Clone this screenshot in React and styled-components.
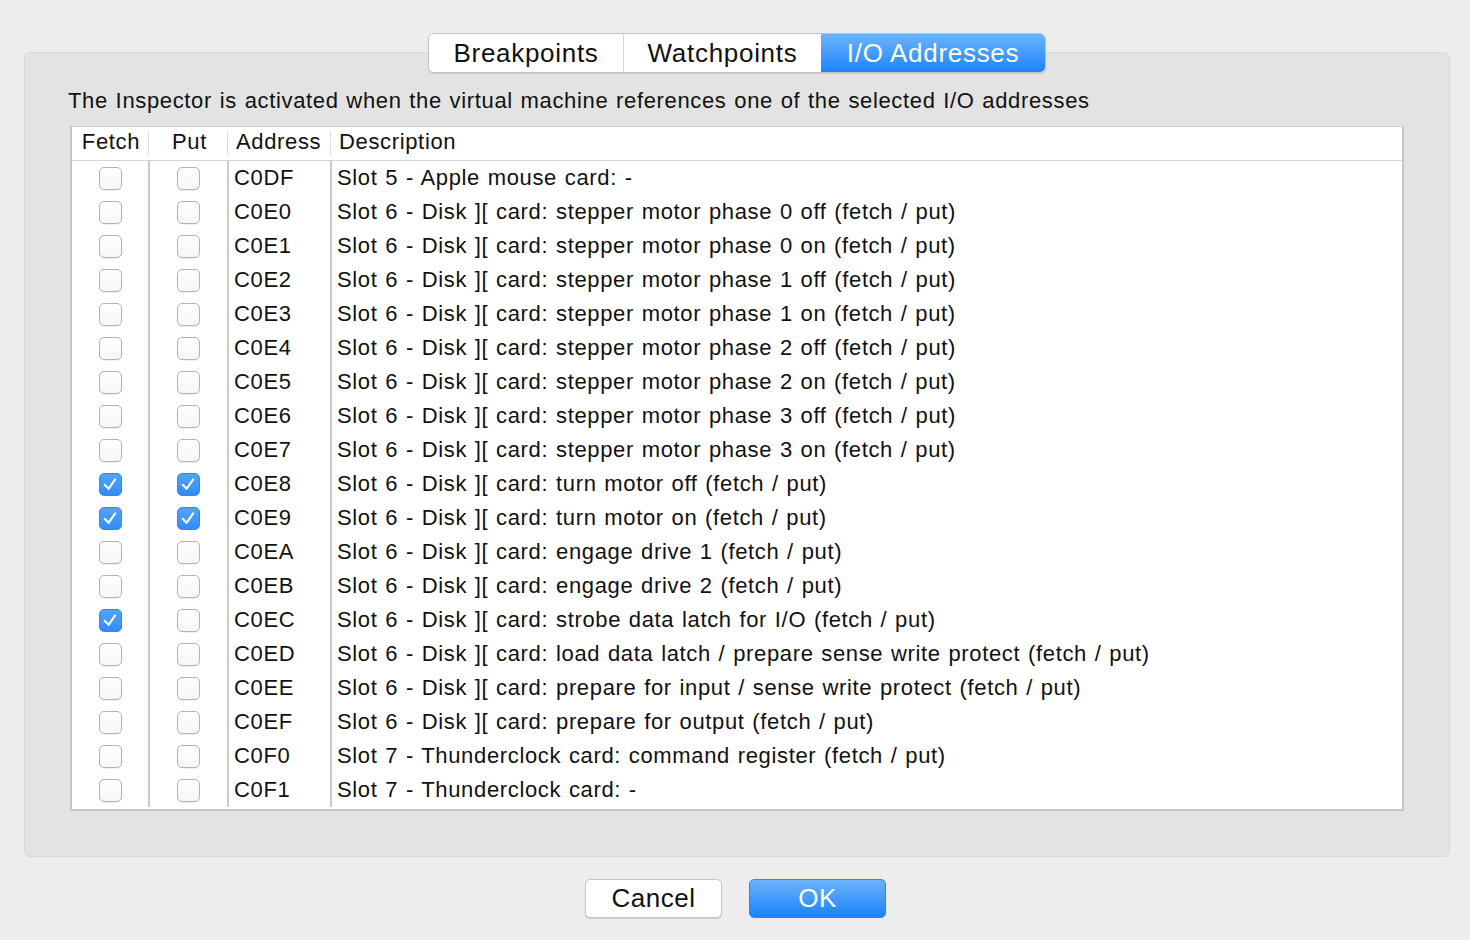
import React from 'react';
import styled, { createGlobalStyle } from 'styled-components';

const GlobalStyle = createGlobalStyle`
	html, body {
		margin: 0;
		padding: 0;
		background: #ededed;
		font-family: "Liberation Sans", Arial, Helvetica, sans-serif;
		color: #111;
	}
`;

const Page = styled.div`
	width: 1470px;
	height: 940px;
	padding: 52px 20px 0 24px;
	box-sizing: border-box;
`;

const GroupBox = styled.div`
	width: 1426px;
	height: 805px;
	box-sizing: border-box;
	background: #e3e3e3;
	border: 1px solid #d9d9d9;
	border-radius: 6px;
	padding: 0 45px 0 45px;
	display: flex;
	flex-direction: column;
`;

const TabBar = styled.div`
	align-self: center;
	margin-top: -20px;
	height: 40px;
	display: flex;
	border: 1px solid #c3c3c3;
	border-radius: 6px;
	box-sizing: border-box;
	background: #fff;
	box-shadow: 0 1px 1px rgba(0, 0, 0, 0.12);
	overflow: hidden;
`;

const Tab = styled.div`
	width: ${(p) => p.$w}px;
	display: flex;
	align-items: center;
	justify-content: center;
	font-size: 26px;
	letter-spacing: 0.7px;
	color: ${(p) => (p.$active ? '#fff' : '#111')};
	background: ${(p) => (p.$active ? 'linear-gradient(#6db4fb, #1b84fb)' : '#fff')};
	border-left: ${(p) => (p.$first || p.$active ? 'none' : '1px solid #d6d6d6')};
`;

const Intro = styled.div`
	margin: 15px 0 0 -2px;
	font-size: 22px;
	line-height: 26px;
	letter-spacing: 0.65px;
	word-spacing: 1px;
	color: #111;
`;

const Table = styled.div`
	margin-top: 12px;
	width: 1334px;
	box-sizing: border-box;
	background: #fff;
	border: 2px solid #c6c6c6;
	border-top: 1px solid #cfcfcf;
	padding-bottom: 2px;
`;

const Cols = '78px 79px 103px 1fr';

const HeaderRow = styled.div`
	display: grid;
	grid-template-columns: ${Cols};
	height: 33px;
	border-bottom: 1px solid #d6d6d6;
`;

const HeaderCell = styled.div`
	position: relative;
	display: flex;
	align-items: center;
	justify-content: ${(p) => (p.$center ? 'center' : 'flex-start')};
	padding-left: ${(p) => (p.$center ? 0 : 7)}px;
	padding-bottom: 3px;
	font-size: 22px;
	letter-spacing: 0.65px;
	color: #111;

	&::after {
		content: '';
		display: ${(p) => (p.$last ? 'none' : 'block')};
		position: absolute;
		right: 1px;
		top: 4px;
		bottom: 5px;
		width: 1px;
		background: #dedede;
	}
`;

const Row = styled.div`
	display: grid;
	grid-template-columns: ${Cols};
	height: 34px;
`;

const Cell = styled.div`
	display: flex;
	align-items: center;
	justify-content: ${(p) => (p.$center ? 'center' : 'flex-start')};
	padding-left: ${(p) => (p.$center ? 0 : 5)}px;
	border-right: ${(p) => (p.$last ? 'none' : '2px solid #cbcbcb')};
	font-size: 22px;
	letter-spacing: 0.65px;
	word-spacing: 1px;
	color: #111;
	white-space: nowrap;
`;

const Box = styled.div`
	width: 23px;
	height: 23px;
	box-sizing: border-box;
	border-radius: 5px;
	display: flex;
	align-items: center;
	justify-content: center;
	${(p) =>
		p.$checked
			? `
		background: linear-gradient(#52a3fa, #338cf7);
		border: 1px solid #3487ee;
	`
			: `
		background: linear-gradient(#ffffff, #f6f6f6);
		border: 1px solid #b3b3b3;
		box-shadow: 0 1px 0 rgba(0, 0, 0, 0.06);
	`}
`;

const Buttons = styled.div`
	display: flex;
	justify-content: center;
	gap: 27px;
	margin-top: 22px;
	padding-right: 3px;
`;

const Button = styled.div`
	width: 137px;
	height: 39px;
	box-sizing: border-box;
	border-radius: 5px;
	display: flex;
	align-items: center;
	justify-content: center;
	font-size: 26px;
	letter-spacing: 0.5px;
	${(p) =>
		p.$primary
			? `
		color: #fff;
		background: linear-gradient(#6cb3fb, #1a83fb);
		border: 1px solid #2c87ee;
	`
			: `
		color: #111;
		background: #fff;
		border: 1px solid #c6c6c6;
		box-shadow: 0 1px 1px rgba(0, 0, 0, 0.15);
	`}
`;

const Check = ({ checked }) => (
	<Box $checked={checked}>
		{checked && (
			<svg width="23" height="23" viewBox="0 0 23 23">
				<path
					d="M5.2 11.8 L9.4 16.2 L16.6 5.8"
					fill="none"
					stroke="#fff"
					strokeWidth="2.3"
					strokeLinecap="round"
					strokeLinejoin="round"
				/>
			</svg>
		)}
	</Box>
);

const disk = 'Slot 6 - Disk ][ card: ';

const rows = [
	['C0DF', 'Slot 5 - Apple mouse card: -'],
	['C0E0', disk + 'stepper motor phase 0 off (fetch / put)'],
	['C0E1', disk + 'stepper motor phase 0 on (fetch / put)'],
	['C0E2', disk + 'stepper motor phase 1 off (fetch / put)'],
	['C0E3', disk + 'stepper motor phase 1 on (fetch / put)'],
	['C0E4', disk + 'stepper motor phase 2 off (fetch / put)'],
	['C0E5', disk + 'stepper motor phase 2 on (fetch / put)'],
	['C0E6', disk + 'stepper motor phase 3 off (fetch / put)'],
	['C0E7', disk + 'stepper motor phase 3 on (fetch / put)'],
	['C0E8', disk + 'turn motor off (fetch / put)', true, true],
	['C0E9', disk + 'turn motor on (fetch / put)', true, true],
	['C0EA', disk + 'engage drive 1 (fetch / put)'],
	['C0EB', disk + 'engage drive 2 (fetch / put)'],
	['C0EC', disk + 'strobe data latch for I/O (fetch / put)', true, false],
	['C0ED', disk + 'load data latch / prepare sense write protect (fetch / put)'],
	['C0EE', disk + 'prepare for input / sense write protect (fetch / put)'],
	['C0EF', disk + 'prepare for output (fetch / put)'],
	['C0F0', 'Slot 7 - Thunderclock card: command register (fetch / put)'],
	['C0F1', 'Slot 7 - Thunderclock card: -'],
];

const App = () => (
	<Page>
		<GlobalStyle />
		<GroupBox>
			<TabBar>
				<Tab $first $w={194}>Breakpoints</Tab>
				<Tab $w={197}>Watchpoints</Tab>
				<Tab $active $w={224}>I/O Addresses</Tab>
			</TabBar>
			<Intro>
				The Inspector is activated when the virtual machine references one of the selected I/O addresses
			</Intro>
			<Table>
				<HeaderRow>
					<HeaderCell $center>Fetch</HeaderCell>
					<HeaderCell $center>Put</HeaderCell>
					<HeaderCell>Address</HeaderCell>
					<HeaderCell $last>Description</HeaderCell>
				</HeaderRow>
				{rows.map(([addr, desc, fetch, put]) => (
					<Row key={addr}>
						<Cell $center>
							<Check checked={!!fetch} />
						</Cell>
						<Cell $center>
							<Check checked={!!put} />
						</Cell>
						<Cell>{addr}</Cell>
						<Cell $last>{desc}</Cell>
					</Row>
				))}
			</Table>
		</GroupBox>
		<Buttons>
			<Button>Cancel</Button>
			<Button $primary>OK</Button>
		</Buttons>
	</Page>
);

export default App;
